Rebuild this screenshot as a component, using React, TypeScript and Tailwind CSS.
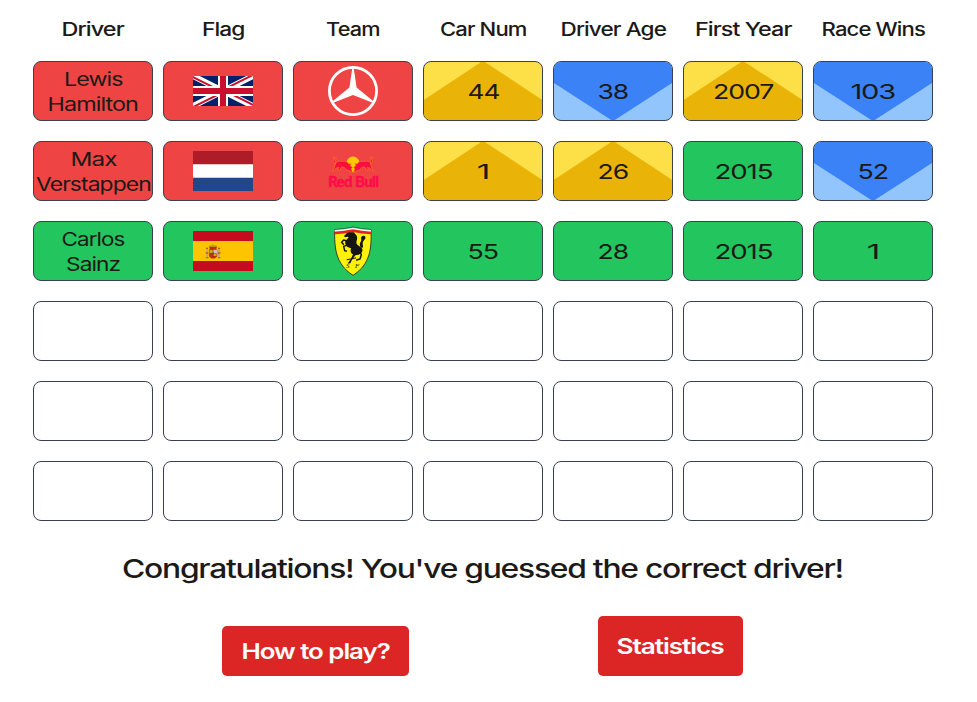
import { useLayoutEffect, useRef, useState } from "react";
import type { ReactNode } from "react";

/** Wide display lettering: stretches a word horizontally to the given width. */
function WideText({ children, width, className = "" }: { children: string; width: number; className?: string }) {
  const ref = useRef<HTMLSpanElement>(null);
  const [scale, setScale] = useState(1);
  useLayoutEffect(() => {
    if (ref.current) setScale(width / ref.current.offsetWidth);
  }, [width, children]);
  return (
    <span ref={ref} className={`inline-block whitespace-nowrap tracking-[-0.04em] ${className}`} style={{ transform: `scaleX(${scale})` }}>
      {children}
    </span>
  );
}

type Tone = "red" | "green" | "higher" | "lower" | "empty";

const tones: Record<Tone, string> = {
  red: "bg-[#ef4444]",
  green: "bg-[#22c55e]",
  higher: "bg-[#fde047]",
  lower: "bg-[#93c5fd]",
  empty: "bg-white",
};

const fills: Record<Tone, string> = {
  red: "",
  green: "",
  higher: "bg-[#eab308] [clip-path:polygon(48.5%_0,51.5%_0,100%_65%,100%_100%,0_100%,0_65%)]",
  lower: "bg-[#3b82f6] [clip-path:polygon(0_0,100%_0,100%_36%,51.5%_100%,48.5%_100%,0_36%)]",
  empty: "",
};

function Cell({ tone, children }: { tone: Tone; children?: ReactNode }) {
  return (
    <div className={`h-[60px] w-[120px] overflow-hidden rounded-lg border border-[#374151] ${tones[tone]}`}>
      <div className={`flex h-full w-full flex-col items-center justify-center ${fills[tone]}`}>{children}</div>
    </div>
  );
}

function Name({ first, last }: { first: [string, number]; last: [string, number] }) {
  return (
    <div className="flex flex-col items-center pt-[1px] text-[18.5px] leading-[25px]">
      <WideText width={first[1]}>{first[0]}</WideText>
      <WideText width={last[1]}>{last[0]}</WideText>
    </div>
  );
}

function Num({ value, width }: { value: string; width: number }) {
  return (
    <WideText width={width} className="pt-[1px] text-[20.5px] leading-[28px]">
      {value}
    </WideText>
  );
}

function UKFlag() {
  return (
    <svg width="60" height="30" viewBox="0 0 60 30">
      <clipPath id="uk-a"><path d="M0 0v30h60V0z" /></clipPath>
      <clipPath id="uk-b"><path d="M30 15h30v15zv15H0zH0V0zV0h30z" /></clipPath>
      <g clipPath="url(#uk-a)">
        <path d="M0 0v30h60V0z" fill="#012169" />
        <path d="M0 0l60 30m0-30L0 30" stroke="#fff" strokeWidth="6" />
        <path d="M0 0l60 30m0-30L0 30" clipPath="url(#uk-b)" stroke="#c8102e" strokeWidth="4" />
        <path d="M30 0v30M0 15h60" stroke="#fff" strokeWidth="10" />
        <path d="M30 0v30M0 15h60" stroke="#c8102e" strokeWidth="6" />
      </g>
    </svg>
  );
}

function NetherlandsFlag() {
  return (
    <svg width="60" height="40" viewBox="0 0 60 40">
      <path fill="#fff" d="M0 0h60v40H0z" />
      <path fill="#ae1c28" d="M0 0h60v13.33H0z" />
      <path fill="#21468b" d="M0 26.67h60V40H0z" />
    </svg>
  );
}

function SpainFlag() {
  return (
    <svg width="60" height="40" viewBox="0 0 60 40">
      <path fill="#c60b1e" d="M0 0h60v40H0z" />
      <path fill="#ffc400" d="M0 10h60v20H0z" />
      <path fill="#ad1519" d="M16 15.4q4-3 8 0l-.8 3h-6.4zM15.9 18.5h8.4v6.2q-1 2.8-4.2 2.8t-4.2-2.8z" opacity=".85" />
      <path fill="#c8b100" d="M16.2 14.6q3.8-2.2 7.6 0l-.4 1.2h-6.8zM19.4 13h1.2v1.5h-1.2zM16.6 19h3v3h-3zM20.6 23h3v2h-3z" />
      <path fill="#d8b8c4" d="M20.4 18.7h3.8v3.8h-3.8z" />
      <circle cx="20.1" cy="22.6" r="1" fill="#5b3b8c" />
      <path fill="#b9a27a" d="M13.4 18h1.5v9h-1.5zM25.2 18h1.5v9h-1.5z" />
      <path fill="#ad3a19" d="M12.6 21.4h2.6v1.2h-2.6zM25 21.4h2.6v1.2H25zM13 16.8h2v1h-2zM25.1 16.8h2v1h-2z" />
      <path fill="#7b7a45" d="M12.8 26.2h2.8v1h-2.8zM24.7 26.2h2.8v1h-2.8z" />
    </svg>
  );
}

function MercedesLogo() {
  return (
    <svg width="50" height="50" viewBox="0 0 50 50">
      <circle cx="25" cy="25" r="23.6" fill="none" stroke="#fff" strokeWidth="2.8" />
      <path fill="#fff" d="M24.3 2h1.4l2.9 19.6L45.4 35.2l-.8 1.6L25 28.9 5.4 36.8l-.8-1.6 16.8-13.6z" />
    </svg>
  );
}

function RedBullLogo() {
  return (
    <svg width="52" height="34" viewBox="0 0 52 34" className="mt-[2px]">
      <ellipse cx="26" cy="9.3" rx="6.8" ry="7.9" fill="#ffc906" />
      <g fill="#ff0b3c" stroke="#f5871f" strokeWidth=".6">
        <path d="M25.4 12.2l-2.2-1.4 1-2.6-2.2.8c-1.2-2.1-3.8-3.4-6.6-2.5C12 5.4 9 6.6 7.8 9 6.4 7.6 6.2 5.6 8 3.6L6 3l.6-1 2.8.9C8 4.7 8.2 6.3 8.8 7c-.2 3-1.6 4.9-1.7 6.4l-1.5 2.3h2.2l.9-2.3 3-1.4-.9 3.3h1.7l2-3.5 2.9.6 2.2 2.6 2.7.7 1.6 1.4h1.4l-1.1-3.4z" />
        <path d="M26.6 12.2l2.2-1.4-1-2.6 2.2.8c1.2-2.1 3.8-3.4 6.6-2.5 3.4-1.1 6.4.1 7.6 2.5 1.4-1.4 1.6-3.4-.2-5.4L46 3l-.6-1-2.8.9C44 4.7 43.8 6.3 43.2 7c.2 3 1.6 4.9 1.7 6.4l1.5 2.3h-2.2l-.9-2.3-3-1.4.9 3.3h-1.7l-2-3.5-2.9.6-2.2 2.6-2.7.7-1.6 1.4h-1.4l1.1-3.4z" />
      </g>
      <text x="1" y="31.6" textLength="50.5" lengthAdjust="spacingAndGlyphs" fill="#ff0b4a" stroke="#ff0b4a" strokeWidth=".3" className="font-['Lato'] text-[15.5px] font-black tracking-[-0.04em]">
        Red Bull
      </text>
    </svg>
  );
}

function FerrariLogo() {
  return (
    <svg width="38" height="50" viewBox="131 49 114 150">
      <path fill="#fff10a" stroke="#35422a" strokeWidth="3" d="M133 60q28-1 55-8 27 7 54 8c2 54-1 103-54 137C135 163 132 114 133 60z" />
      <path fill="#128b4b" d="M133 58q28-1 55-7 27 6 54 7v5q-28-1-54-6-27 5-55 6z" />
      <path fill="#fff" d="M133 61q28-1 55-7 27 6 54 7v5q-28-1-54-6-27 5-55 6z" />
      <path fill="#e32227" d="M133 66q28-1 55-7 27 6 54 7v8q-28-1-54-7-27 6-55 7z" />
      <g fill="#151515">
        <path d="M191 68l3 4c7 5 8 14 5 21-2 6 0 10 4 14 6 5 11 6 13 12 2 7-3 13-11 16l-10 2-10 13-5 11-8 1 3-5 7-10 6-13c-8-4-8-11-6-18l-10-4c-7-4-9-12-6-19l9-10-3-2-8 2-3-4 8-8 6-3z" />
        <path d="M211 114c-4-9-3-14 1-19 3-5-3-11 3-15 7-4 12 1 10 7-4 5-7 6-8 13-1 5 3 8 0 14z" />
      </g>
      <g fill="none" stroke="#151515" strokeWidth="4.5" strokeLinejoin="round" strokeLinecap="round">
        <path d="M172 95l-12-4-6 7 5 6M174 105l-14 5 3 13 5 1M209 125l4 10-4 13-10 3" />
        <path strokeWidth="3" d="M170 150l26-5" />
      </g>
      <text x="167" y="176" fill="#151515" className="font-['Liberation_Serif'] text-[21px] italic">S</text>
      <text x="194" y="176" fill="#151515" className="font-['Liberation_Serif'] text-[21px] italic">F</text>
    </svg>
  );
}

const headers: [string, number][] = [
  ["Driver", 62],
  ["Flag", 43],
  ["Team", 54],
  ["Car Num", 87],
  ["Driver Age", 106],
  ["First Year", 96],
  ["Race Wins", 104],
];

const emptyCells = Array.from({ length: 21 }, (_, i) => i);

export default function App() {
  return (
    <main className="h-[702px] w-full overflow-hidden bg-white font-['Inter',sans-serif] text-[#1c1917]">
      <div className="grid grid-cols-[repeat(7,120px)] gap-x-[10px] pl-[33px] pt-[14px]">
        {headers.map(([label, width]) => (
          <div key={label} className="flex h-[30px] items-center justify-center text-[18.5px] font-medium leading-[30px]">
            <WideText width={width}>{label}</WideText>
          </div>
        ))}
      </div>
      <div className="mt-[17px] grid grid-cols-[repeat(7,120px)] gap-x-[10px] gap-y-[20px] pl-[33px]">
        <Cell tone="red"><Name first={["Lewis", 59]} last={["Hamilton", 91]} /></Cell>
        <Cell tone="red"><UKFlag /></Cell>
        <Cell tone="red"><MercedesLogo /></Cell>
        <Cell tone="higher"><Num value="44" width={32} /></Cell>
        <Cell tone="lower"><Num value="38" width={31} /></Cell>
        <Cell tone="higher"><Num value="2007" width={60} /></Cell>
        <Cell tone="lower"><Num value="103" width={44} /></Cell>

        <Cell tone="red"><Name first={["Max", 46]} last={["Verstappen", 115]} /></Cell>
        <Cell tone="red"><NetherlandsFlag /></Cell>
        <Cell tone="red"><RedBullLogo /></Cell>
        <Cell tone="higher"><Num value="1" width={13} /></Cell>
        <Cell tone="higher"><Num value="26" width={31} /></Cell>
        <Cell tone="green"><Num value="2015" width={58} /></Cell>
        <Cell tone="lower"><Num value="52" width={30} /></Cell>

        <Cell tone="green"><Name first={["Carlos", 63]} last={["Sainz", 54]} /></Cell>
        <Cell tone="green"><SpainFlag /></Cell>
        <Cell tone="green"><FerrariLogo /></Cell>
        <Cell tone="green"><Num value="55" width={30} /></Cell>
        <Cell tone="green"><Num value="28" width={31} /></Cell>
        <Cell tone="green"><Num value="2015" width={58} /></Cell>
        <Cell tone="green"><Num value="1" width={13} /></Cell>

        {emptyCells.map((i) => <Cell key={i} tone="empty" />)}
      </div>
      <h2 className="mt-[28px] flex h-[40px] w-[965px] items-center justify-center text-[26px] font-medium leading-[40px]">
        <WideText width={721}>Congratulations! You've guessed the correct driver!</WideText>
      </h2>
      <div className="mt-[27px] flex items-end pl-[222px] text-[21.5px] font-semibold text-white">
        <button className="flex h-[50px] w-[187px] items-center justify-center rounded-[5px] bg-[#dc2626]">
          <WideText width={148}>How to play?</WideText>
        </button>
        <button className="ml-[189px] flex h-[60px] w-[145px] items-center justify-center rounded-[5px] bg-[#dc2626]">
          <WideText width={107}>Statistics</WideText>
        </button>
      </div>
    </main>
  );
}
